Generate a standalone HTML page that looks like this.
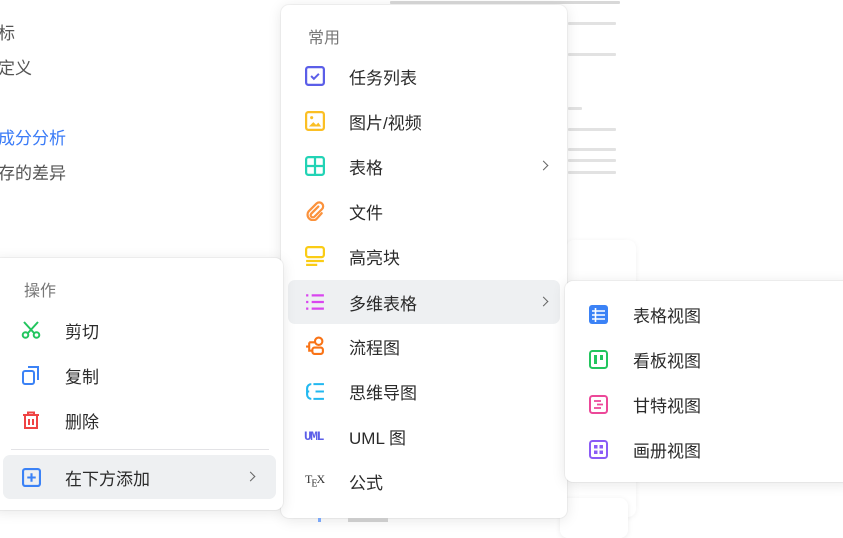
<!DOCTYPE html>
<html><head><meta charset="utf-8">
<style>
*{margin:0;padding:0;box-sizing:border-box}
body{width:843px;height:522px;overflow:hidden;background:#fff;font-family:"Liberation Sans","Noto Sans CJK SC",sans-serif;position:relative;color:#262626}
.lt{position:absolute;font-size:17px;color:#555;white-space:nowrap}
.menu{position:absolute;background:#fff;border-radius:8px;box-shadow:0 2px 14px rgba(0,0,0,0.10),0 0 0 1px rgba(0,0,0,0.04)}
.it{position:absolute;height:44px;display:flex;align-items:center;font-size:17px;color:#2b2b2b;white-space:nowrap}
.it svg{position:absolute}
.hl{background:#eef0f2;border-radius:7px}
.hd{position:absolute;font-size:16px;color:#777}
.arr{position:absolute;width:7px;height:7px;border-right:1.5px solid #666;border-top:1.5px solid #666;transform:rotate(45deg)}
.doc{position:absolute;height:3px;background:#e2e2e2;border-radius:1px}
</style></head><body>
<div class="lt" style="left:-19px;top:19px">指标</div>
<div class="lt" style="left:-19px;top:54px">的定义</div>
<div class="lt" style="left:-19px;top:124px;color:#3a7bf7">的成分分析</div>
<div class="lt" style="left:-19px;top:159px">留存的差异</div>

<div class="doc" style="left:390px;top:1px;width:230px;background:#d8d8d8"></div>
<div class="doc" style="left:568px;top:22px;width:48px"></div>
<div class="doc" style="left:568px;top:53px;width:48px"></div>
<div class="doc" style="left:568px;top:107px;width:14px"></div>
<div class="doc" style="left:568px;top:128px;width:48px"></div>
<div class="doc" style="left:568px;top:148px;width:48px"></div>
<div class="doc" style="left:568px;top:159px;width:48px"></div>
<div class="doc" style="left:568px;top:171px;width:48px"></div>

<div class="menu" style="left:566px;top:240px;width:70px;height:277px;box-shadow:0 1px 6px rgba(0,0,0,0.06)"></div>
<div class="menu" style="left:560px;top:498px;width:68px;height:40px;box-shadow:0 1px 6px rgba(0,0,0,0.08)"></div>

<!-- main menu -->
<div class="menu" style="left:281px;top:5px;width:286px;height:513px">
  <div class="hd" style="left:27px;top:19px">常用</div>
  <div class="it" style="left:0;top:49px;width:286px"><svg style="left:24px" width="20" height="20" viewBox="0 0 18 18"><rect x="1" y="1" width="16" height="16" rx="2" fill="none" stroke="#5b5ee8" stroke-width="2"/><path d="M5.5 9l2.5 2.5 4.5-4.5" fill="none" stroke="#5b5ee8" stroke-width="1.8"/></svg><span style="position:absolute;left:68px">任务列表</span></div>
  <div class="it" style="left:0;top:94px;width:286px"><svg style="left:24px" width="20" height="20" viewBox="0 0 18 18"><rect x="1" y="1" width="16" height="16" rx="2" fill="none" stroke="#fbbf24" stroke-width="2"/><circle cx="6" cy="6" r="1.4" fill="#fbbf24"/><path d="M3.5 14l4-4 2.5 2.5 2-2 2.5 3.5z" fill="#fbbf24"/></svg><span style="position:absolute;left:68px">图片/视频</span></div>
  <div class="it" style="left:0;top:139px;width:286px"><svg style="left:24px" width="20" height="20" viewBox="0 0 18 18"><rect x="1" y="1" width="16" height="16" rx="2" fill="none" stroke="#22d3b5" stroke-width="2"/><path d="M9 1v16M1 9h16" stroke="#22d3b5" stroke-width="2"/></svg><span style="position:absolute;left:68px">表格</span><div class="arr" style="left:259px;top:18px"></div></div>
  <div class="it" style="left:0;top:184px;width:286px"><svg style="left:24px" width="20" height="20" viewBox="0 0 18 18"><path d="M12 5l-6.5 6.5a2 2 0 0 0 2.8 2.8l7-7a3.5 3.5 0 0 0-5-5l-7 7a5 5 0 0 0 7 7L15 11" fill="none" stroke="#fb923c" stroke-width="2" stroke-linecap="round"/></svg><span style="position:absolute;left:68px">文件</span></div>
  <div class="it" style="left:0;top:229px;width:286px"><svg style="left:24px" width="20" height="20" viewBox="0 0 18 18"><rect x="1" y="1" width="16" height="9" rx="2" fill="none" stroke="#facc15" stroke-width="2"/><path d="M1 13.5h16M1 17h10" stroke="#facc15" stroke-width="2"/></svg><span style="position:absolute;left:68px">高亮块</span></div>
  <div class="it hl" style="left:7px;top:275px;width:272px"><svg style="left:17px" width="20" height="20" viewBox="0 0 18 18"><path d="M1 3h2M1 9h2M1 15h2M6 3h11M6 9h11M6 15h11" stroke="#d946ef" stroke-width="2"/></svg><span style="position:absolute;left:61px">多维表格</span><div class="arr" style="left:252px;top:18px"></div></div>
  <div class="it" style="left:0;top:319px;width:286px"><svg style="left:24px" width="20" height="20" viewBox="0 0 19 19"><circle cx="13" cy="5" r="3.5" fill="none" stroke="#f97316" stroke-width="2"/><rect x="7" y="11" width="10" height="6" rx="2" fill="none" stroke="#f97316" stroke-width="2"/><path d="M1 10h3M4 6v8h3M4 6h5.5" fill="none" stroke="#f97316" stroke-width="2"/></svg><span style="position:absolute;left:68px">流程图</span></div>
  <div class="it" style="left:0;top:364px;width:286px"><svg style="left:24px" width="20" height="19" viewBox="0 0 19 18"><path d="M6 2a4 4 0 0 0-4 4v6a4 4 0 0 0 4 4M1 9h3M8 2h10M10 9h8M8 16h10" fill="none" stroke="#22b8f0" stroke-width="2"/></svg><span style="position:absolute;left:68px">思维导图</span></div>
  <div class="it" style="left:0;top:409px;width:286px"><span style="position:absolute;left:23px;font-size:13px;font-weight:bold;color:#5b5ee8;font-family:'Liberation Mono',monospace;letter-spacing:-1.5px">UML</span><span style="position:absolute;left:68px">UML 图</span></div>
  <div class="it" style="left:0;top:454px;width:286px"><span style="position:absolute;left:24px;font-size:12px;color:#333;font-family:'Liberation Serif',serif;letter-spacing:-1px">T<sub style="font-size:10px">E</sub>X</span><span style="position:absolute;left:68px">公式</span></div>
</div>
<div style="position:absolute;left:318px;top:518px;width:3px;height:4px;background:#7aa7f7"></div>
<div style="position:absolute;left:348px;top:518px;width:40px;height:4px;background:#ccc"></div>

<!-- left menu -->
<div class="menu" style="left:-8px;top:258px;width:291px;height:252px">
  <div class="hd" style="left:32px;top:19px">操作</div>
  <div class="it" style="left:8px;top:50px;width:280px"><svg style="left:21px" width="20" height="18" viewBox="0 0 20 18"><path d="M3 1l10 11M17 1L7 12" stroke="#22c55e" stroke-width="2"/><circle cx="4.5" cy="14" r="2.8" fill="none" stroke="#22c55e" stroke-width="2"/><circle cx="15.5" cy="14" r="2.8" fill="none" stroke="#22c55e" stroke-width="2"/></svg><span style="position:absolute;left:65px">剪切</span></div>
  <div class="it" style="left:8px;top:95px;width:280px"><svg style="left:22px" width="18" height="19" viewBox="0 0 18 19"><rect x="1" y="5" width="11" height="13" rx="2" fill="none" stroke="#3b82f6" stroke-width="2"/><path d="M6 1h10v13" fill="none" stroke="#3b82f6" stroke-width="2"/></svg><span style="position:absolute;left:65px">复制</span></div>
  <div class="it" style="left:8px;top:140px;width:280px"><svg style="left:22px" width="18" height="19" viewBox="0 0 18 19"><path d="M1 4h16M6 4V1.5h6V4M3 4v13h12V4M7 8v6M11 8v6" fill="none" stroke="#ef4444" stroke-width="2"/></svg><span style="position:absolute;left:65px">删除</span></div>
  <div style="position:absolute;left:19px;top:191px;width:258px;height:1px;background:#e3e3e6"></div>
  <div class="it hl" style="left:11px;top:197px;width:273px"><svg style="left:19px" width="19" height="19" viewBox="0 0 18 18"><rect x="1" y="1" width="16" height="16" rx="2" fill="none" stroke="#3b82f6" stroke-width="2"/><path d="M9 5v8M5 9h8" stroke="#3b82f6" stroke-width="2"/></svg><span style="position:absolute;left:62px">在下方添加</span><div class="arr" style="left:244px;top:18px"></div></div>
</div>

<!-- submenu -->
<div class="menu" style="left:565px;top:281px;width:290px;height:201px">
  <div class="it" style="left:0;top:11px;width:280px"><svg style="left:24px" width="19" height="19" viewBox="0 0 19 19"><rect x="0" y="0" width="19" height="19" rx="3" fill="#3b82f6"/><path d="M3 6h13M3 10h13M3 14h13M6.5 3v14" stroke="#fff" stroke-width="1.6"/></svg><span style="position:absolute;left:68px">表格视图</span></div>
  <div class="it" style="left:0;top:56px;width:280px"><svg style="left:24px" width="19" height="19" viewBox="0 0 19 19"><rect x="1" y="1" width="17" height="17" rx="2.5" fill="none" stroke="#22c55e" stroke-width="2"/><rect x="5" y="5" width="3" height="9" fill="#22c55e"/><rect x="11" y="5" width="3" height="5" fill="#22c55e"/></svg><span style="position:absolute;left:68px">看板视图</span></div>
  <div class="it" style="left:0;top:101px;width:280px"><svg style="left:24px" width="19" height="19" viewBox="0 0 19 19"><rect x="1" y="1" width="17" height="17" rx="2.5" fill="none" stroke="#ec4899" stroke-width="2"/><path d="M5 6h7M8 9.5h6M5 13h7" stroke="#ec4899" stroke-width="1.8"/></svg><span style="position:absolute;left:68px">甘特视图</span></div>
  <div class="it" style="left:0;top:146px;width:280px"><svg style="left:24px" width="19" height="19" viewBox="0 0 19 19"><rect x="1" y="1" width="17" height="17" rx="2.5" fill="none" stroke="#8b5cf6" stroke-width="2"/><rect x="5" y="5" width="3.5" height="3.5" fill="#8b5cf6"/><rect x="10.5" y="5" width="3.5" height="3.5" fill="#8b5cf6"/><rect x="5" y="10.5" width="3.5" height="3.5" fill="#8b5cf6"/><rect x="10.5" y="10.5" width="3.5" height="3.5" fill="#8b5cf6"/></svg><span style="position:absolute;left:68px">画册视图</span></div>
</div>
</body></html>
